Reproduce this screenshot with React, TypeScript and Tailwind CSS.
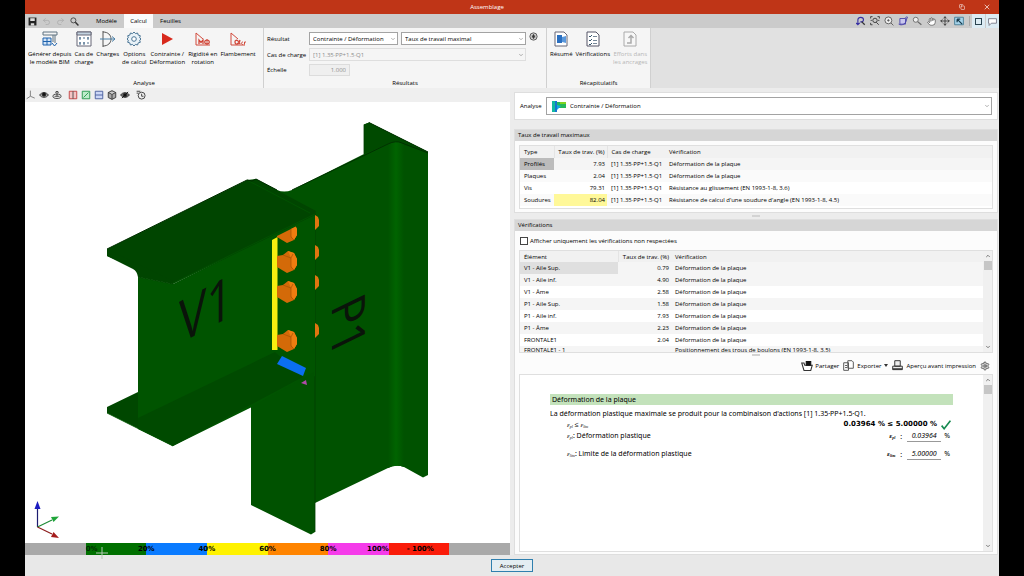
import type { ReactNode } from "react";
import { ChevronDown, ChevronUp, Copy, Hand, Move, Redo2, Search, Settings, Undo2, X } from "lucide-react";

/** Small line drawing on a 16 unit grid, used by every toolbar. */
function Glyph({ size = "size-[10px]", children }: { size?: string; children: ReactNode }) {
  return (
    <svg
      viewBox="0 0 16 16"
      className={`${size} shrink-0`}
      fill="none"
      stroke="#333"
      strokeWidth="1.4"
      aria-hidden
    >
      {children}
    </svg>
  );
}

const GEAR =
  "M8 1l1.5 1.6 2.1-.6.6 2.1 2.1.6-.6 2.1L15 8l-1.3 1.2.6 2.1-2.1.6-.6 2.1-2.1-.6L8 15l-1.5-1.6-2.1.6-.6-2.1-2.1-.6.6-2.1L1 8l1.3-1.2-.6-2.1 2.1-.6.6-2.1 2.1.6z";

type RibbonItem = { lines: string[]; icon: ReactNode; disabled?: boolean };

const ANALYSIS: RibbonItem[] = [
  {
    lines: ["Générer depuis", "le modèle BIM"],
    icon: (
      <g strokeWidth="1">
        <path d="M1 1h14v3H1zM13 4v8M11 4v7" stroke="#5f7380" />
        <path d="M1 7h8v7H1zM1 10.500h8M5 7v7" stroke="#1e62ad" fill="#d3e4f6" />
        <path d="M10 12l2.500 3 2.500-3" stroke="#1e62ad" />
      </g>
    ),
  },
  {
    lines: ["Cas de", "charge"],
    icon: (
      <g strokeWidth="1">
        <path d="M1 1h14v14H1z" fill="#fff" stroke="#667" />
        <path d="M1 1h14v3H1z" fill="#c3d3e0" stroke="#667" />
        <path d="M3 7h2M7 7h2M11 7h2M3 12h2M7 12h2M11 12h2M4 6v3M12 6v3M4 11v3M8 11v3" stroke="#4d6e8c" />
      </g>
    ),
  },
  {
    lines: ["Charges"],
    icon: (
      <g strokeWidth="1">
        <path d="M3 0v16M3 1c5 0 8 3 8 7s-3 7-8 7" stroke="#555" />
        <path d="M0 8h15M12 5.500l3 2.500-3 2.500" stroke="#4a80a8" />
      </g>
    ),
  },
  {
    lines: ["Options", "de calcul"],
    icon: (
      <g strokeWidth="1" stroke="#4a7595">
        <path d={GEAR} fill="#e9f2f8" />
        <circle cx="8" cy="8" r="2.300" fill="#fff" />
      </g>
    ),
  },
  {
    lines: ["Contrainte /", "Déformation"],
    icon: <path d="M3 2l11 6-11 6z" fill="#d8291c" stroke="none" />,
  },
  {
    lines: ["Rigidité en", "rotation"],
    icon: (
      <g stroke="#d1483a" strokeWidth="1">
        <path d="M1 2v12h14M1 2l7 6" />
        <path d="M4 13V9l2 2.500L8 9v4" strokeWidth="1.300" />
        <ellipse cx="12" cy="11" rx="2.300" ry="1.900" strokeWidth="1.200" />
        <path d="M12 8v6" />
      </g>
    ),
  },
  {
    lines: ["Flambement"],
    icon: (
      <g stroke="#d1483a" strokeWidth="1">
        <path d="M1 2v12h14M1 2l7 6" />
        <path d="M10 9c-1 5-5 5-5 2s4-2 5 2" strokeWidth="1.300" />
        <path d="M13 11c-2 0-2 2.500 0 2.500M14.500 13.500V11H16" />
      </g>
    ),
  },
];

const SUMMARY: RibbonItem[] = [
  {
    lines: ["Résumé"],
    icon: (
      <g strokeWidth="1">
        <path d="M2 1h9l3 3v11H2z" fill="#fff" stroke="#667" />
        <path d="M4 4h5v8H4z" fill="#2a6fc0" stroke="none" />
        <path d="M9 6l4-1v7l-4-1z" fill="#5a98dc" stroke="none" />
      </g>
    ),
  },
  {
    lines: ["Vérifications"],
    icon: (
      <g strokeWidth="1">
        <path d="M2 1h9l3 3v11H2z" fill="#fff" stroke="#556" />
        <path d="M4 5l1 1 2-2M4 9l1 1 2-2M4 13l1 1 2-2" stroke="#38586e" />
        <path d="M8 5.500h4M8 9.500h4M8 12.500h4" stroke="#789" />
      </g>
    ),
  },
  {
    lines: ["Efforts dans", "les ancrages"],
    disabled: true,
    icon: (
      <g strokeWidth="1" stroke="#aaa">
        <path d="M2 1h9l3 3v11H2z" fill="#f7f7f7" />
        <path d="M5 12h4V5M6.500 7L9 4.500 11.500 7" strokeWidth="1.500" />
      </g>
    ),
  },
];

const VIEW_TOOLS: { label: string; icon: ReactNode }[] = [
  { label: "Axes", icon: <path d="M7 1v9L1 14M7 10l7 3" stroke="#777" /> },
  {
    label: "Afficher",
    icon: (
      <g>
        <path d="M1 8c3-5 11-5 14 0-3 5-11 5-14 0z" fill="#aaa" />
        <circle cx="8" cy="7" r="3" fill="#111" />
      </g>
    ),
  },
  {
    label: "Boulons",
    icon: (
      <g>
        <ellipse cx="8" cy="10" rx="6.500" ry="3.500" />
        <path d="M8 10V2M5 4l3-2 3 2M4 10h8" />
      </g>
    ),
  },
  {
    label: "Plan avant",
    icon: (
      <g>
        <path d="M2 2h12v12H2z" fill="#f5c4c4" stroke="#c03b3b" />
        <path d="M8 2v12" stroke="#444" />
      </g>
    ),
  },
  {
    label: "Plan latéral",
    icon: (
      <g>
        <path d="M2 2h12v12H2z" fill="#bfeccb" stroke="#219447" />
        <path d="M4 12L12 4" stroke="#219447" />
      </g>
    ),
  },
  {
    label: "Plan horizontal",
    icon: (
      <g>
        <path d="M2 2h12v12H2z" fill="#ccd7f6" stroke="#445a9a" />
        <path d="M2 8h12" stroke="#445a9a" />
      </g>
    ),
  },
  { label: "Vue 3D", icon: <path d="M8 1l6 3v8l-6 3-6-3V4zM2 4l6 3 6-3M8 7v8" fill="#aaa" /> },
  {
    label: "Masquer",
    icon: (
      <g>
        <path d="M1 8c3-5 11-5 14 0-3 5-11 5-14 0z" fill="#777" />
        <circle cx="8" cy="8" r="3" fill="#111" />
        <path d="M3 13L13 3" stroke="#111" />
      </g>
    ),
  },
];

const NAV_TOOLS: { label: string; icon: ReactNode }[] = [
  {
    label: "Orbite",
    icon: (
      <g>
        <path d="M3 14V6c0-5 9-5 9 0 0 3-3 4-5 3M0 11l3 3 3-3" stroke="#3730a3" strokeWidth="1.800" />
        <path d="M9 9l5 5" strokeWidth="2" />
      </g>
    ),
  },
  {
    label: "Zoom étendu",
    icon: (
      <g>
        <circle cx="8" cy="7" r="3.500" />
        <path d="M10 10l4 4M1 4V1h3M12 1h3v3M1 11v3h3M1 7h2M13 7h2" />
      </g>
    ),
  },
  {
    label: "Zoom fenêtre",
    icon: (
      <g stroke="#555">
        <circle cx="7" cy="7" r="5.500" fill="#eee" />
        <path d="M5 7h4M7 5v4M11 11l4 4" />
      </g>
    ),
  },
  {
    label: "Rotation",
    icon: (
      <g>
        <path d="M3 4h9v9H3z" fill="#c9c7ee" stroke="#4740a8" />
        <path d="M1 13c5 3 13 0 13-10M11 4l3-3 2 3" stroke="#4740a8" />
      </g>
    ),
  },
  {
    label: "Zoom arrière",
    icon: (
      <g stroke="#666">
        <circle cx="6" cy="6" r="4" fill="#eee" />
        <path d="M9 9l6 5" strokeWidth="2" />
      </g>
    ),
  },
];

type MaxRow = { type: string; ratio: string; check: string };

const MAX_ROWS: MaxRow[] = [
  { type: "Profilés", ratio: "7.93", check: "Déformation de la plaque" },
  { type: "Plaques", ratio: "2.04", check: "Déformation de la plaque" },
  { type: "Vis", ratio: "79.31", check: "Résistance au glissement (EN 1993-1-8, 3.6)" },
  { type: "Soudures", ratio: "82.04", check: "Résistance de calcul d'une soudure d'angle (EN 1993-1-8, 4.5)" },
];

const CHECK_ROWS: [string, string, string][] = [
  ["V1 - Aile Sup.", "0.79", "Déformation de la plaque"],
  ["V1 - Aile inf.", "4.90", "Déformation de la plaque"],
  ["V1 - Âme", "2.58", "Déformation de la plaque"],
  ["P1 - Aile Sup.", "1.58", "Déformation de la plaque"],
  ["P1 - Aile inf.", "7.93", "Déformation de la plaque"],
  ["P1 - Âme", "2.23", "Déformation de la plaque"],
  ["FRONTALE1", "2.04", "Déformation de la plaque"],
  ["FRONTALE1 - 1", "", "Positionnement des trous de boulons (EN 1993-1-8, 3.5)"],
];

function RibbonGroup({ title, className, children }: { title: string; className: string; children: ReactNode }) {
  return (
    <section className={`flex flex-col justify-between border-r border-[#d0d0d0] bg-[#f5f5f5] ${className}`}>
      {children}
      <h2 className="h-[9px] text-center leading-[8px]">{title}</h2>
    </section>
  );
}

function RibbonButtons({ items }: { items: RibbonItem[] }) {
  return (
    <div className="flex items-start gap-[3px] px-[3px] pt-[3px]">
      {items.map((item) => (
        <button
          key={item.lines[0]}
          disabled={item.disabled}
          className="flex flex-col items-center gap-[3px] whitespace-nowrap leading-[8px] disabled:text-[#b5b5b5]"
        >
          <Glyph size="size-[16px]">{item.icon}</Glyph>
          <span>
            {item.lines.map((line) => (
              <span key={line} className="block">
                {line}
              </span>
            ))}
          </span>
        </button>
      ))}
    </div>
  );
}

function Picker({
  id,
  value,
  className,
  disabled,
}: {
  id: string;
  value: string;
  className: string;
  disabled?: boolean;
}) {
  return (
    <div className={`relative flex ${className}`}>
      <select
        id={id}
        aria-label={id}
        disabled={disabled}
        className="w-full appearance-none border border-[#a3a3a3] bg-white pl-[3px] text-[6px] disabled:border-[#dedede] disabled:bg-[#f5f5f5] disabled:text-[#8d8d8d]"
      >
        <option>{value}</option>
      </select>
      <ChevronDown className="pointer-events-none absolute inset-y-0 right-[2px] my-auto size-[6px] text-[#666]" />
    </div>
  );
}

function Ribbon() {
  return (
    <div className="flex h-[60px] bg-[#e1e1e1]">
      <RibbonGroup title="Analyse" className="w-[239px]">
        <RibbonButtons items={ANALYSIS} />
      </RibbonGroup>
      <RibbonGroup title="Résultats" className="w-[283px]">
        <div className="grid grid-cols-[39px_89px_125px_auto] items-center gap-[3px] pl-[3px] pt-[4px]">
          <label htmlFor="Résultat">Résultat</label>
          <Picker id="Résultat" value="Contrainte / Déformation" className="h-[13px]" />
          <Picker id="Type de résultat" value="Taux de travail maximal" className="h-[13px]" />
          <button aria-label="Informations" className="self-start">
            <Glyph size="size-[9px]">
              <circle cx="8" cy="8" r="6.500" fill="#ccc" stroke="#444" />
              <path d="M8 4v8M6 6v4M10 6v4" stroke="#111" />
            </Glyph>
          </button>
          <label htmlFor="Cas de charge" className="whitespace-nowrap">
            Cas de charge
          </label>
          <Picker
            id="Cas de charge"
            value="[1] 1.35·PP+1.5·Q1"
            className="col-span-2 h-[13px]"
            disabled
          />
          <span />
          <label htmlFor="scale">Échelle</label>
          <input
            id="scale"
            disabled
            defaultValue="1.000"
            className="h-[12px] w-[41px] border border-[#dcdcdc] bg-[#efefef] pr-[3px] text-right text-[#8d8d8d]"
          />
        </div>
      </RibbonGroup>
      <RibbonGroup title="Récapitulatifs" className="w-[104px]">
        <RibbonButtons items={SUMMARY} />
      </RibbonGroup>
    </div>
  );
}

function TopBars() {
  return (
    <header>
      <div className="flex h-[14px] items-center bg-[#bf3517] text-white">
        <h1 className="flex-1 text-center">Assemblage</h1>
        <button aria-label="Restaurer" className="flex w-[25px] justify-center">
          <Copy className="size-[6px]" />
        </button>
        <button aria-label="Fermer" className="flex w-[25px] justify-center">
          <X className="size-[8px]" />
        </button>
      </div>
      <div className="flex h-[14px] items-stretch bg-[#cbcbcb]">
        <div className="flex w-[64px] items-center gap-[5px] pl-[3px]">
          <button aria-label="Enregistrer">
            <Glyph size="size-[9px]">
              <path d="M1 1h14v14H1z" fill="#222" stroke="none" />
              <path d="M4 2h8v5H4zM5 11h6v4H5z" fill="#ddd" stroke="none" />
            </Glyph>
          </button>
          <button aria-label="Annuler">
            <Undo2 className="size-[9px] text-[#aaa]" />
          </button>
          <button aria-label="Rétablir">
            <Redo2 className="size-[9px] text-[#aaa]" />
          </button>
          <button aria-label="Rechercher">
            <Glyph size="size-[9px]">
              <circle cx="6" cy="6" r="4.500" />
              <path d="M9.500 9.500l5.500 5.500" strokeWidth="2.600" />
            </Glyph>
          </button>
        </div>
        <nav className="flex">
          <button className="w-[35px]">Modèle</button>
          <button className="w-[29px] bg-[#fafafa]">Calcul</button>
          <button className="w-[35px]">Feuilles</button>
        </nav>
        <div className="ml-auto flex items-center">
          {NAV_TOOLS.map((tool) => (
            <button key={tool.label} aria-label={tool.label} className="flex w-[14px] justify-center">
              <Glyph>{tool.icon}</Glyph>
            </button>
          ))}
          <button aria-label="Déplacer" className="flex w-[14px] justify-center">
            <Hand className="size-[9px] text-[#555]" fill="#fff" />
          </button>
          <button aria-label="Panoramique" className="flex w-[14px] justify-center">
            <Move className="size-[10px] text-[#333]" />
          </button>
          <button aria-label="Vue précédente" className="mr-px flex w-[14px] justify-center">
            <Glyph>
              <path d="M1 2h14v12H1z" fill="#a5d3ea" stroke="#457a94" />
              <path d="M5 5l8 8M5 5v5M5 5h5" stroke="#173a4b" strokeWidth="2" />
            </Glyph>
          </button>
          <span className="ml-[2px] h-[10px] border-l border-[#aaa]" />
          <button aria-label="Cadre" className="ml-[2px] flex h-full w-[13px] items-center justify-center bg-[#dcebf3]">
            <span className="size-[7px] border border-[#29434f]" />
          </button>
          <button aria-label="Étiquettes" className="ml-px flex h-full w-[13px] items-center justify-center bg-[#dcebf3]">
            <Glyph size="size-[9px]">
              <path d="M1 3h14v8H6l-4 4V11H1z" fill="#fff" stroke="#667" />
            </Glyph>
          </button>
        </div>
      </div>
      <Ribbon />
    </header>
  );
}

function Bolt({ x, y }: { x: number; y: number }) {
  return (
    <g transform={`translate(${x} ${y})`}>
      <path d="M-11-6l6-1 5-4 6 2 3 6v6l-3 5-7 3-10-6z" fill="#d46a08" />
      <path d="M0-11l6 2 3 6v6l-3 5-3-4V-4z" fill="#ee7d10" />
      <path d="M-5-7l8 3 2-4M3-4v9l3 3" fill="none" stroke="#a85205" strokeWidth="0.700" />
    </g>
  );
}

/** Beam V1 bolted to column P1, coloured by utilisation ratio. */
function Model() {
  return (
    <svg
      viewBox="25 102 485 441"
      className="min-h-0 w-full flex-1 bg-white"
      role="img"
      aria-label="Modèle 3D de l'assemblage"
    >
      <defs>
        <linearGradient id="fillet">
          <stop offset="0" stopColor="#005200" />
          <stop offset="0.5" stopColor="#006400" />
          <stop offset="1" stopColor="#005200" />
        </linearGradient>
        <linearGradient id="root" x1="0.44" y1="0.36" x2="0.56" y2="0.64">
          <stop offset="0" stopColor="#005400" />
          <stop offset="0.5" stopColor="#006500" />
          <stop offset="1" stopColor="#004a00" />
        </linearGradient>
      </defs>

      {/* column */}
      <path
        d="M251 300V505L311 534.500L315 532V503L388 468Q396 464 404 467L423 477.500L428 475V152L369 122.500L364 124.500V154L292 190Q284 193 277 190L256 179L247 180Z"
        fill="#005200"
      />
      <path d="M364 124.500L369 122.500L428 152L404 145Q394 140 388 144L364 154Z" fill="#004a00" />
      <path d="M388 144Q396 139 404 144V467Q396 464 388 468Z" fill="url(#fillet)" />
      <path d="M292 190L388 144Q396 140 402 143L428 153" fill="none" stroke="#003200" />
      <path d="M369 122.500L428 152" stroke="#003200" />
      <path d="M364 124.500V154M315 213V532M308 218V380" stroke="#003e00" strokeWidth="0.800" />

      {/* beam */}
      <path d="M138 277V425L173 446L315 376V213L173 284Z" fill="#005400" />
      <path d="M251 407V500H314V372Z" fill="#005200" />
      <path d="M107 407L138 392V425L173 444V446L107 413Z" fill="#004700" />
      <path d="M138 418L275 352L303 377L173 446L138 429Z" fill="#004a00" />
      <path d="M138 414L274 347L276 362L145 426L138 422Z" fill="url(#root)" />
      <path d="M107 249L247 180L252 181L256 179L316 211L315 215L173 284L107 256Z" fill="#004500" />
      <path d="M107 249L173 281V284L138 277Q137 271 133 269L107 256Z" fill="#004500" />
      <path d="M138 277L173 284" stroke="#004800" />
      <path d="M173 283L315 214M247 180L310 213M107 413L173 446" fill="none" stroke="#005600" strokeWidth="0.800" />
      <path d="M107 249L247 180L252 181L256 179L277 190" fill="none" stroke="#002e00" />

      {/* welds and bolts */}
      <path d="M272 240L277.500 237V350H272Z" fill="#f7ee10" />
      <clipPath id="under">
        <path d="M277 236L315 217V260H277Z" />
      </clipPath>
      <g clipPath="url(#under)">
        <Bolt x={288} y={232} />
      </g>
      <Bolt x={288} y={262} />
      <Bolt x={288} y={292} />
      <Bolt x={288} y={341} />
      {[222, 252, 282, 330].map((y) => (
        <path key={y} d={`M315 ${y - 7}l3 2 1 3v6l-4 4z`} fill="#e07510" />
      ))}
      <path d="M282 356L306 368L303 376L277 364Z" fill="#0b6ff0" />
      <path d="M301 383l5-3 1 5z" fill="#b04aa8" />

      <text
        transform="translate(179 344) rotate(-28) skewX(-28)"
        className="fill-[#0a140a] font-['Open_Sans'] text-[52px]"
      >
        V1
      </text>
      <text
        transform="translate(332 306) rotate(90) skewX(26)"
        className="fill-[#0a140a] font-['Open_Sans'] text-[46px]"
      >
        P1
      </text>

      {/* axes */}
      <g strokeWidth="1.200">
        <path d="M37.500 527V508" stroke="#1c1c70" />
        <path d="M37.500 501l3 8h-6z" fill="#1c1cc0" />
        <path d="M37.500 527L52 520" stroke="#1e8a35" />
        <path d="M59 516.500l-8 .5 2.500 5z" fill="#1fa53a" />
        <path d="M37.500 527L52 534" stroke="#8c1c1c" />
        <path d="M59 538l-5.500-6-2.500 5z" fill="#a51c1c" />
      </g>
    </svg>
  );
}

const LEGEND = [
  { color: "bg-[#a9a9a9]", label: "", place: "" },
  { color: "bg-[#007000]", label: "0%", place: "opacity-60" },
  { color: "bg-[#0a7bff]", label: "20%", place: "w-0 justify-center" },
  { color: "bg-[#fff200]", label: "40%", place: "w-0 justify-center" },
  { color: "bg-[#ff8400]", label: "60%", place: "w-0 justify-center" },
  { color: "bg-[#f53bea]", label: "80%", place: "w-0 justify-center" },
  { color: "bg-[#fa1c0a]", label: "100%", place: "w-0 justify-end" },
  { color: "bg-[#a9a9a9]", label: "", place: "" },
];

function Viewer() {
  return (
    <section className="flex min-h-0 flex-col">
      <div className="flex h-[14px] items-center gap-[3px] bg-[#efefef] pl-px">
        {VIEW_TOOLS.map((tool, i) => (
          <button key={tool.label} aria-label={tool.label} className={i === 3 ? "ml-[3px]" : ""}>
            <Glyph>{tool.icon}</Glyph>
          </button>
        ))}
        <button aria-label="Historique" className="ml-[3px]">
          <Glyph>
            <circle cx="9" cy="9" r="5.500" />
            <path d="M1 2h6M1 5h3M9 6v4h3" />
          </Glyph>
        </button>
      </div>
      <Model />
      <div className="relative">
        <div className="grid h-[12px] grid-cols-8 font-['DejaVu_Sans',sans-serif] text-[7px] font-bold">
          {LEGEND.map((step, i) => (
            <div key={i} className={`flex items-center ${step.color}`}>
              <span className={`flex whitespace-nowrap ${step.place}`}>{step.label}</span>
              {step.label === "100%" && <span className="pl-[18px]">- 100%</span>}
            </div>
          ))}
        </div>
        <svg viewBox="0 0 12 12" className="absolute left-[71px] top-[4px] size-[12px]" stroke="#b5c8b5" aria-hidden>
          <path d="M6 0v12M0 6h12" />
        </svg>
      </div>
    </section>
  );
}

function PanelTitle({ children }: { children: ReactNode }) {
  return <h2 className="h-[11px] bg-[#d6d6d6] pl-[3px] leading-[11px]">{children}</h2>;
}

function Scrollbar() {
  return (
    <div className="flex w-[9px] shrink-0 flex-col items-center justify-between bg-[#f0f0f0] py-[2px]" aria-hidden>
      <div className="flex flex-col items-center gap-[2px]">
        <ChevronUp className="size-[6px] text-[#555]" strokeWidth={3} />
        <div className="h-[9px] w-[8px] bg-[#c6c6c6]" />
      </div>
      <ChevronDown className="size-[6px] text-[#555]" strokeWidth={3} />
    </div>
  );
}

function Grip({ className }: { className: string }) {
  return (
    <div className={`flex items-center justify-center ${className}`}>
      <span className="h-[2px] w-[8px] bg-[#d3d3d3]" />
    </div>
  );
}

function MaxTable() {
  return (
    <div className="mx-[4px] mt-[4px] border border-[#dfdfdf] bg-white pb-[2px]">
      <table className="w-full table-fixed text-left">
        <thead>
          <tr className="h-[12px] bg-[#f1f1f1]">
            <th className="w-[34px] pl-[4px] font-normal">Type</th>
            <th className="w-[53px] border-x border-[#e4e4e4] pr-[2px] text-right font-normal">Taux de trav. (%)</th>
            <th className="w-[58px] pl-[4px] font-normal">Cas de charge</th>
            <th className="pl-[4px] font-normal">Vérification</th>
          </tr>
        </thead>
        <tbody>
          {MAX_ROWS.map((row) => (
            <tr key={row.type} className="h-[12px] first:bg-[#f5f5f5] even:bg-[#fafafa]">
              <td className={`pl-[4px] ${row.type === "Profilés" ? "bg-[#bcbcbc]" : ""}`}>{row.type}</td>
              <td className={`pr-[2px] text-right ${row.type === "Soudures" ? "bg-[#fff899]" : ""}`}>{row.ratio}</td>
              <td className="whitespace-nowrap pl-[4px]">[1] 1.35·PP+1.5·Q1</td>
              <td className="pl-[4px]">{row.check}</td>
            </tr>
          ))}
        </tbody>
      </table>
    </div>
  );
}

function CheckTable() {
  return (
    <div className="mx-[4px] flex h-[103px] overflow-hidden border border-[#dfdfdf] bg-white">
      <div className="flex-1 overflow-hidden">
        <table className="w-full table-fixed text-left">
          <thead>
            <tr className="h-[11px] bg-[#f1f1f1]">
              <th className="w-[98px] pl-[4px] font-normal">Élément</th>
              <th className="w-[53px] border-l border-[#e4e4e4] pr-[2px] text-right font-normal">Taux de trav. (%)</th>
              <th className="pl-[4px] font-normal">Vérification</th>
            </tr>
          </thead>
          <tbody>
            {CHECK_ROWS.map(([element, ratio, check], i) => (
              <tr key={element} className="h-[12px] first:bg-[#f5f5f5] even:bg-[#f5f5f5] last:align-top">
                <td className={`pl-[4px] ${i === 0 ? "bg-[#dfdfdf]" : ""}`}>{element}</td>
                <td className="pr-[2px] text-right">{ratio}</td>
                <td className="pl-[4px]">{check}</td>
              </tr>
            ))}
          </tbody>
        </table>
      </div>
      <Scrollbar />
    </div>
  );
}

function Epsilon({ sub }: { sub: string }) {
  return (
    <i className="font-['Liberation_Serif',serif]">
      ε<sub className="text-[4px]">{sub}</sub>
    </i>
  );
}

function ReportValue({ sub, value }: { sub: string; value: string }) {
  return (
    <span className="flex items-center gap-[5px] pr-[3px]">
      <b>
        <Epsilon sub={sub} />
      </b>
      <span>:</span>
      <span className="flex gap-[3px]">
        <i className="w-[34px] border-b border-[#999] text-center">{value}</i>%
      </span>
    </span>
  );
}

function Report() {
  return (
    <div className="mx-[4px] mb-[2px] flex min-h-0 flex-1 border border-[#dfdfdf] bg-white">
      <article className="flex-1 px-[30px] pt-[19px] font-['Noto_Sans',sans-serif] text-[7px] leading-[11px]">
        <h3 className="h-[11px] bg-[#c3e2bb] pl-[2px]">Déformation de la plaque</h3>
        <p className="mt-[3px]">
          La déformation plastique maximale se produit pour la combinaison d'actions [1] 1.35·PP+1.5·Q1.
        </p>
        <div className="flex h-[11px] items-center justify-between pl-[17px]">
          <span>
            <Epsilon sub="pl" /> ≤ <Epsilon sub="lim" />
          </span>
          <span className="flex items-center gap-[4px] pr-[2px]">
            <b className="font-['DejaVu_Sans',sans-serif]">0.03964 % ≤ 5.00000 %</b>
            <Glyph>
              <path d="M1 9l4 5L15 1" stroke="#168a50" strokeWidth="2.600" />
            </Glyph>
          </span>
        </div>
        <div className="flex h-[12px] items-center justify-between pl-[17px]">
          <span>
            <Epsilon sub="pl" />: Déformation plastique
          </span>
          <ReportValue sub="pl" value="0.03964" />
        </div>
        <div className="mt-[6px] flex h-[12px] items-center justify-between pl-[17px]">
          <span>
            <Epsilon sub="lim" />: Limite de la déformation plastique
          </span>
          <ReportValue sub="lim" value="5.00000" />
        </div>
      </article>
      <Scrollbar />
    </div>
  );
}

function Results() {
  return (
    <section className="flex min-h-0 flex-col pr-px pt-[4px]">
      <div className="flex h-[28px] items-center gap-[3px] border border-[#dedede] bg-white pb-px pl-[5px] pr-[5px]">
        <label htmlFor="Analyse" className="w-[23px]">
          Analyse
        </label>
        <div className="relative flex-1">
          <select
            id="Analyse"
            className="block h-[18px] w-full appearance-none border border-[#a3a3a3] bg-white pl-[23px] text-[6px]"
          >
            <option>Contrainte / Déformation</option>
          </select>
          <svg viewBox="0 0 16 12" className="pointer-events-none absolute left-[5px] top-[3px] h-[12px] w-[16px]" aria-hidden>
            <path d="M1 1h5v11H1z" fill="#12b8a0" />
            <path d="M4 1h2v11H4z" fill="#1674d0" />
            <path d="M6 2h9v6H6z" fill="#25b85a" />
            <path d="M6 5l4 1-4 4z" fill="#14a8e0" />
            <path d="M9 2h6v2H9z" fill="#7ed321" />
          </svg>
          <ChevronDown className="pointer-events-none absolute inset-y-0 right-[2px] my-auto size-[6px] text-[#666]" />
        </div>
      </div>

      <section className="mt-[9px] border border-[#dedede] bg-[#fcfcfc] pb-[3px]">
        <PanelTitle>Taux de travail maximaux</PanelTitle>
        <MaxTable />
      </section>
      <Grip className="h-[6px]" />

      <section className="flex min-h-0 flex-1 flex-col border border-[#dedede] bg-[#fcfcfc]">
        <PanelTitle>Vérifications</PanelTitle>
        <label className="flex h-[19px] items-center gap-[2px] pl-[5px]">
          <input type="checkbox" className="size-[8px] appearance-none border border-[#444] bg-white" />
          Afficher uniquement les vérifications non respectées
        </label>
        <CheckTable />
        <Grip className="h-[4px]" />
        <div className="flex h-[17px] items-center justify-end gap-[4px] pr-[7px]">
          <button className="flex items-center gap-[2px]">
            <Glyph size="size-[12px]">
              <path d="M1 4l3 10h9l2-7H5L4 4z" fill="#fff" />
              <path d="M7 2h6v5H7z" fill="#111" stroke="#111" />
            </Glyph>
            Partager
          </button>
          <button className="flex items-center gap-[3px]">
            <Glyph size="size-[11px]">
              <path d="M7 1h6l2 2v9H7zM1 4h7v11H1zM3 8h3M3 11h3" fill="#fff" stroke="#555" />
            </Glyph>
            Exporter
            <svg viewBox="0 0 4 3" className="h-[3px] w-[4px]" aria-hidden>
              <path d="M0 0h4L2 3z" fill="#333" />
            </svg>
          </button>
          <button className="flex items-center gap-[3px]">
            <Glyph size="size-[11px]">
              <path d="M4 1h8v8H4zM1 9h14v5H1z" fill="#eee" />
              <path d="M1 13h14" strokeWidth="2" />
            </Glyph>
            Aperçu avant impression
          </button>
          <button aria-label="Paramètres">
            <Settings className="size-[10px] text-[#555]" fill="#ccc" />
          </button>
        </div>
        <Report />
      </section>
    </section>
  );
}

export default function App() {
  return (
    <div className="h-screen bg-black px-[25px]">
      <div className="flex h-full flex-col bg-[#ececec] font-['Open_Sans',sans-serif] text-[6px] leading-[8px] text-black">
        <TopBars />
        <main className="grid min-h-0 flex-1 grid-cols-2 grid-rows-1 gap-[4px]">
          <Viewer />
          <Results />
        </main>
        <footer className="flex h-[21px] items-center justify-center bg-[#e8e8e8]">
          <button className="h-[13px] w-[42px] border border-[#2f7fae] bg-[#e4edf2]">Accepter</button>
        </footer>
      </div>
    </div>
  );
}
